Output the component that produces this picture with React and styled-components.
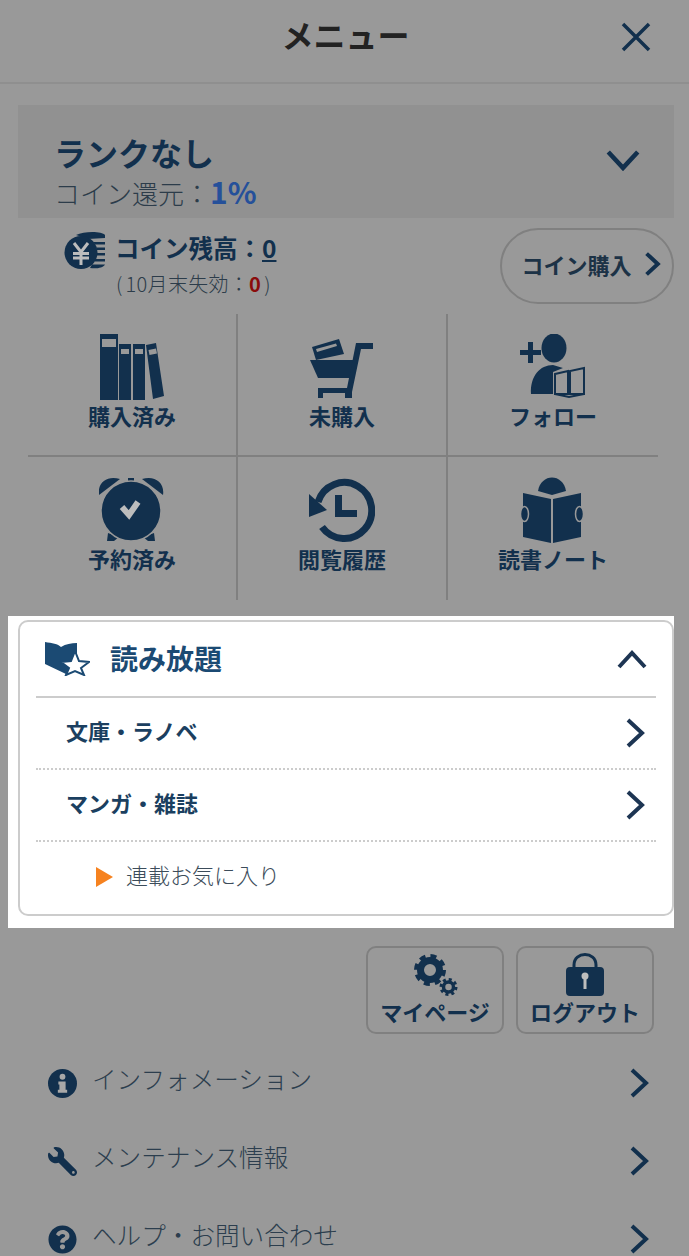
import React from "react";
import styled, { createGlobalStyle } from "styled-components";
import { FaQuestionCircle, FaWrench } from "react-icons/fa";

const navy = "#12304d";
const dimText = "#1c3246";

const GlobalStyle = createGlobalStyle`
  html, body {
    margin: 0;
    padding: 0;
    background: #999;
  }
  * {
    box-sizing: border-box;
  }
`;

const Page = styled.div`
  width: 689px;
  height: 1256px;
  overflow: hidden;
  background: #999;
  font-family: "Noto Sans CJK JP", "Noto Sans", sans-serif;
  color: ${dimText};
`;

const Header = styled.header`
  height: 84px;
  border-bottom: 2px solid #8f8f8f;
  display: flex;
  align-items: center;
  justify-content: center;
  position: relative;
`;

const Title = styled.h1`
  margin: 0 0 14px 2px;
  font-size: 32px;
  line-height: 40px;
  font-weight: 700;
  color: #222;
`;

const CloseButton = styled.button`
  position: absolute;
  right: 36px;
  top: 20px;
  width: 34px;
  height: 34px;
  padding: 0;
  border: none;
  background: none;
  line-height: 0;
`;

const RankBox = styled.section`
  margin: 21px 15px 0 18px;
  height: 113px;
  background: #919191;
  padding: 26px 34px 0 36px;
  display: flex;
  justify-content: space-between;
  align-items: flex-start;
`;

const RankName = styled.div`
  font-size: 32px;
  line-height: 42px;
  font-weight: 700;
  color: ${navy};
`;

const RankRate = styled.div`
  font-size: 26px;
  line-height: 36px;
  font-weight: 300;
  color: #2c3c4a;
`;

const RatePercent = styled.span`
  font-size: 30px;
  font-weight: 700;
  color: #25509a;
`;

const RankToggle = styled.div`
  margin-top: 13px;
`;

const CoinRow = styled.section`
  margin: 10px 15px 0 64px;
  height: 76px;
  display: flex;
  justify-content: space-between;
`;

const CoinInfo = styled.div`
  display: flex;
  gap: 9px;
  padding-top: 4px;
`;

const CoinText = styled.div`
  display: flex;
  flex-direction: column;
`;

const CoinBalance = styled.div`
  font-size: 24.500px;
  line-height: 32px;
  font-weight: 700;
  color: ${navy};
`;

const CoinValue = styled.span`
  text-decoration: underline;
`;

const CoinExpire = styled.div`
  margin: 3px 0 0 1px;
  font-size: 20px;
  line-height: 34px;
  letter-spacing: 0.3px;
  font-weight: 300;
  color: #2c3c4a;
`;

const ExpireCount = styled.span`
  font-weight: 700;
  color: #8a0c0c;
`;

const Paren = styled.span`
  margin: 0 3px;
`;

const BuyButton = styled.button`
  width: 174px;
  height: 76px;
  border: 2px solid #808080;
  border-radius: 38px;
  background: none;
  font-family: inherit;
  font-size: 22px;
  font-weight: 700;
  color: ${dimText};
  display: flex;
  align-items: center;
  justify-content: center;
  gap: 9px;
  padding: 0 0 4px 12px;
`;

const ShelfGrid = styled.nav`
  margin: 10px 31px 0 28px;
  display: grid;
  grid-template-columns: repeat(3, 1fr);
  grid-auto-rows: 143px;
`;

const ShelfCell = styled.a`
  display: flex;
  flex-direction: column;
  align-items: center;
  padding-top: 20px;
  border-right: ${(p) => (p.$last ? "none" : "2px solid #808080")};
  border-bottom: ${(p) => (p.$lower ? "none" : "2px solid #808080")};
  font-size: 22px;
  line-height: 32px;
  font-weight: 700;
  color: ${navy};
`;

const ShelfIcon = styled.svg`
  width: 66px;
  height: 66px;
  margin-bottom: -1px;
  fill: ${navy};
`;

const Spotlight = styled.div`
  margin: 16px 15px 0 8px;
  height: 312px;
  background: #fff;
  padding: 4px 0 0 10px;
`;

const Card = styled.section`
  height: 296px;
  border: 2px solid #ccc;
  border-radius: 10px;
  padding: 0 16px;
`;

const CardHead = styled.div`
  height: 76px;
  border-bottom: 2px solid #ccc;
  display: flex;
  align-items: center;
  padding: 0 9px 0 8px;
  gap: 20px;
`;

const CardTitle = styled.h2`
  flex: 1;
  margin: 0 0 3px;
  font-size: 28px;
  font-weight: 700;
  color: #1b4a73;
`;

const CardRow = styled.a`
  height: 72px;
  border-bottom: 2px dotted #ccc;
  display: flex;
  align-items: center;
  justify-content: space-between;
  padding: 0 5px 0 30px;
  font-size: 22px;
  font-weight: 700;
  color: #1b3f60;
`;

const CardRowLabel = styled.span`
  margin-bottom: 7px;
`;

const SerialRow = styled.a`
  height: 70px;
  display: flex;
  align-items: center;
  gap: 13px;
  padding-left: 60px;
  font-size: 22px;
  font-weight: 300;
  color: #3c4c5a;
`;

const SerialLabel = styled.span`
  margin-bottom: 6px;
`;

const OrangeMark = styled.span`
  width: 0;
  height: 0;
  border-style: solid;
  border-width: 10px 0 10px 17px;
  border-color: transparent transparent transparent #f6821f;
`;

const AccountRow = styled.div`
  margin: 18px 35px 0 0;
  display: flex;
  justify-content: flex-end;
  gap: 12px;
`;

const AccountButton = styled.a`
  width: 138px;
  height: 88px;
  border: 2px solid #808080;
  border-radius: 10px;
  display: flex;
  flex-direction: column;
  align-items: center;
  padding-top: 4px;
  font-size: 22px;
  line-height: 28px;
  font-weight: 700;
  color: ${navy};
`;

const AccountIcon = styled.svg`
  height: 44px;
  width: 50px;
  fill: ${navy};
  margin-bottom: 1px;
`;

const LinkList = styled.ul`
  list-style: none;
  margin: 6px 0 0;
  padding: 0 34px 0 48px;
`;

const LinkRow = styled.li`
  height: 78px;
  display: flex;
  align-items: center;
  gap: 15px;
  font-size: 24.600px;
  font-weight: 300;
  color: #2c3e4e;

  svg.lead {
    width: 29px;
    height: 29px;
    margin-top: 8px;
    color: ${navy};
    flex: none;
  }
  svg.mirror {
    transform: scaleX(-1);
  }
`;

const LinkLabel = styled.span`
  flex: 1;
  margin-top: -3px;
`;

const LinkArrow = styled.span`
  line-height: 0;
  margin-top: 8px;
`;

// Single stroke chevron; dir rotates it for the open/closed states
const Chevron = ({ size = 30, dir = "right", color = navy, width = 4 }) => {
  const rot = { right: 0, down: 90, up: -90 }[dir];
  return (
    <svg width={size} height={size} viewBox="0 0 30 30" style={{ transform: `rotate(${rot}deg)`, flex: "none" }}>
      <path d="M7 2 L21 15 L7 28" fill="none" stroke={color} strokeWidth={width} />
    </svg>
  );
};

const CoinIcon = () => (
  <svg width="42" height="38" viewBox="0 0 42 38">
    <path d="M12 3 C20 -1 38 -1 41 3 V6 L24 7 Z" fill={navy} />
    <path d="M29 10 H41 V12.500 H31 Z M32 15.500 H41 V18 H33 Z M33 21 H41 V23.500 H33 Z M31 27 H41 V29.500 H31 Z M28 32.500 H41 C39 36 32 37 26 36 Z" fill={navy} />
    <circle cx="17" cy="20.500" r="16.500" fill={navy} />
    <path d="M10 11 L17 20 L24 11 M9 21.500 H25 M9 26 H25 M17 20 V33" fill="none" stroke="#bdbdbd" strokeWidth="3" />
  </svg>
);

const BooksIcon = () => (
  <ShelfIcon viewBox="0 0 66 66">
    <path fillRule="evenodd" d="M1 0 H19 V66 H1 Z M3 5 V13 H17 V5 Z" />
    <path fillRule="evenodd" d="M20 10 H32 V66 H20 Z M22 15 V20 H30 V15 Z" />
    <path fillRule="evenodd" d="M34 10 H46 V66 H34 Z M36 15 V20 H44 V15 Z" />
    <path fillRule="evenodd" d="M47 11 L57 9 L65 62 L54 65 Z M49.500 16 L50.500 21 L58 19.500 L57 14.500 Z" />
  </ShelfIcon>
);

const CartIcon = () => (
  <ShelfIcon viewBox="0 0 66 66">
    <path d="M3 13 L30 5 L35 20 L7 26 Z" />
    <path d="M7 15 L27 9.500 L28 12 L8 18 Z" fill="#999" />
    <path d="M1 26 H45 L41 44 H9 Z" />
    <path d="M47 9 H64 V15 H52 L43 58 V64 H36 V59 H14 V64 H9 V54 H38 Z" />
  </ShelfIcon>
);

const FollowIcon = () => (
  <ShelfIcon viewBox="0 0 66 66">
    <path d="M0 16 H8 V8 H13 V16 H21 V21 H13 V29 H8 V21 H0 Z" />
    <ellipse cx="34" cy="14" rx="12.500" ry="14.500" />
    <path d="M11 60 C10 42 20 31 33 31 L43 34 L33 38 V60 Z" />
    <path d="M35 40 L48 37 V60 L35 60 Z M50 60 V37 L64 34 V60 Z" fill="#999" stroke={navy} strokeWidth="2" />
    <path d="M35 60 L49 63 L64 60" fill="none" stroke={navy} strokeWidth="2" />
  </ShelfIcon>
);

const AlarmIcon = () => (
  <ShelfIcon viewBox="0 0 66 66">
    <path d="M0 18 C-2 5 9 -2 21 2 Z M64 18 C66 5 55 -2 43 2 Z" />
    <rect x="29" y="1" width="6" height="6" />
    <path d="M9 56 L8 64 H15 L20 60 Z M55 56 L56 64 H49 L44 60 Z" />
    <circle cx="32" cy="34" r="30" stroke="#999" strokeWidth="1.500" />
    <path d="M23 30 L30 38 L39 25" fill="none" stroke="#bdbdbd" strokeWidth="6" />
  </ShelfIcon>
);

const HistoryIcon = () => (
  <ShelfIcon viewBox="0 0 66 66">
    <path d="M9 25 A27.500 28 0 1 1 13 50" fill="none" stroke={navy} strokeWidth="7" />
    <path d="M0 17 L18 33 L0 40 Z" />
    <path d="M26 18 H33 V33 H48 V40 H26 Z" />
  </ShelfIcon>
);

const ReaderIcon = () => (
  <ShelfIcon viewBox="0 0 66 66">
    <path d="M18 14 C21 -4 43 -4 46 14 L32 18 Z" />
    <path d="M3 16 L31 22 V66 L3 60 Z M33 22 L61 16 V60 L33 66 Z" />
    <ellipse cx="4.500" cy="37" rx="4" ry="7.500" stroke="#999" strokeWidth="1.500" />
    <ellipse cx="59.500" cy="37" rx="4" ry="7.500" stroke="#999" strokeWidth="1.500" />
  </ShelfIcon>
);

const BookStarIcon = () => (
  <svg width="46" height="34" viewBox="0 0 46 34" style={{ flex: "none" }}>
    <path d="M1 0 C8 1 14 2 17 5 C22 2 27 1 33 1 V20 L22 32 L1 22 Z" fill="#1b4a73" />
    <path d="M31 9 L35 19 L45 20 L37 26 L40 33 L31 29 L22 33 L25 26 L17 20 L27 19 Z" fill="#fff" stroke="#1b4a73" strokeWidth="2" />
  </svg>
);

const GearsIcon = () => (
  <AccountIcon viewBox="0 0 50 44">
    <circle cx="20" cy="18" r="9.500" fill="none" stroke={navy} strokeWidth="7" />
    <circle cx="20" cy="18" r="14" fill="none" stroke={navy} strokeWidth="4" strokeDasharray="6 5" />
    <circle cx="38.500" cy="35" r="5" fill="none" stroke={navy} strokeWidth="3.500" />
    <circle cx="38.500" cy="35" r="7.500" fill="none" stroke={navy} strokeWidth="3" strokeDasharray="3 2.890" />
  </AccountIcon>
);

const LockIcon = () => (
  <AccountIcon viewBox="0 0 50 44">
    <path d="M14 18 V13 C14 -1 36 -1 36 13 V18" fill="none" stroke={navy} strokeWidth="3" />
    <rect x="6" y="15" width="38" height="29" rx="4" />
    <circle cx="25" cy="24" r="3.500" fill="#bdbdbd" />
    <rect x="23.500" y="24" width="3" height="13" fill="#bdbdbd" />
  </AccountIcon>
);

// Round badge with a heavy slab-serif "i" cut out of it
const InfoIcon = ({ className }) => (
  <svg className={className} viewBox="0 0 28 28">
    <circle cx="14" cy="14" r="14" fill={navy} />
    <circle cx="14" cy="7.500" r="2.800" fill="#a8a8a8" />
    <path d="M10 12 H17 V20 H18.500 V23 H9.500 V20 H11 V15 H10 Z" fill="#a8a8a8" />
  </svg>
);

const shelves = [
  { label: "購入済み", icon: <BooksIcon /> },
  { label: "未購入", icon: <CartIcon /> },
  { label: "フォロー", icon: <FollowIcon /> },
  { label: "予約済み", icon: <AlarmIcon /> },
  { label: "閲覧履歴", icon: <HistoryIcon /> },
  { label: "読書ノート", icon: <ReaderIcon /> },
];

const links = [
  { label: "インフォメーション", Icon: InfoIcon },
  { label: "メンテナンス情報", Icon: FaWrench, mirror: true },
  { label: "ヘルプ・お問い合わせ", Icon: FaQuestionCircle },
];

export default function App() {
  return (
    <Page>
      <GlobalStyle />
      <Header>
        <Title>メニュー</Title>
        <CloseButton aria-label="閉じる">
          <svg width="34" height="34" viewBox="0 0 34 34">
            <path d="M4 4 L30 30 M30 4 L4 30" stroke={navy} strokeWidth="3.500" fill="none" />
          </svg>
        </CloseButton>
      </Header>

      <RankBox>
        <div>
          <RankName>ランクなし</RankName>
          <RankRate>
            コイン還元：<RatePercent>1%</RatePercent>
          </RankRate>
        </div>
        <RankToggle>
          <Chevron size={34} dir="down" />
        </RankToggle>
      </RankBox>

      <CoinRow>
        <CoinInfo>
          <CoinIcon />
          <CoinText>
            <CoinBalance>
              コイン残高：<CoinValue>0</CoinValue>
            </CoinBalance>
            <CoinExpire>
              (<Paren>10月末失効：<ExpireCount>0</ExpireCount></Paren>)
            </CoinExpire>
          </CoinText>
        </CoinInfo>
        <BuyButton>
          コイン購入
          <Chevron size={24} width={5} />
        </BuyButton>
      </CoinRow>

      <ShelfGrid>
        {shelves.map((s, i) => (
          <ShelfCell key={s.label} $lower={i > 2} $last={i % 3 === 2}>
            {s.icon}
            {s.label}
          </ShelfCell>
        ))}
      </ShelfGrid>

      <Spotlight>
        <Card>
          <CardHead>
            <BookStarIcon />
            <CardTitle>読み放題</CardTitle>
            <Chevron size={30} dir="up" color="#1d3553" />
          </CardHead>
          <CardRow>
            <CardRowLabel>文庫・ラノベ</CardRowLabel>
            <Chevron size={30} color="#1d3553" />
          </CardRow>
          <CardRow>
            <CardRowLabel>マンガ・雑誌</CardRowLabel>
            <Chevron size={30} color="#1d3553" />
          </CardRow>
          <SerialRow>
            <OrangeMark />
            <SerialLabel>連載お気に入り</SerialLabel>
          </SerialRow>
        </Card>
      </Spotlight>

      <AccountRow>
        <AccountButton>
          <GearsIcon />
          マイページ
        </AccountButton>
        <AccountButton>
          <LockIcon />
          ログアウト
        </AccountButton>
      </AccountRow>

      <LinkList>
        {links.map(({ label, Icon, mirror }) => (
          <LinkRow key={label}>
            <Icon className={mirror ? "lead mirror" : "lead"} />
            <LinkLabel>{label}</LinkLabel>
            <LinkArrow>
              <Chevron size={30} />
            </LinkArrow>
          </LinkRow>
        ))}
      </LinkList>
    </Page>
  );
}
